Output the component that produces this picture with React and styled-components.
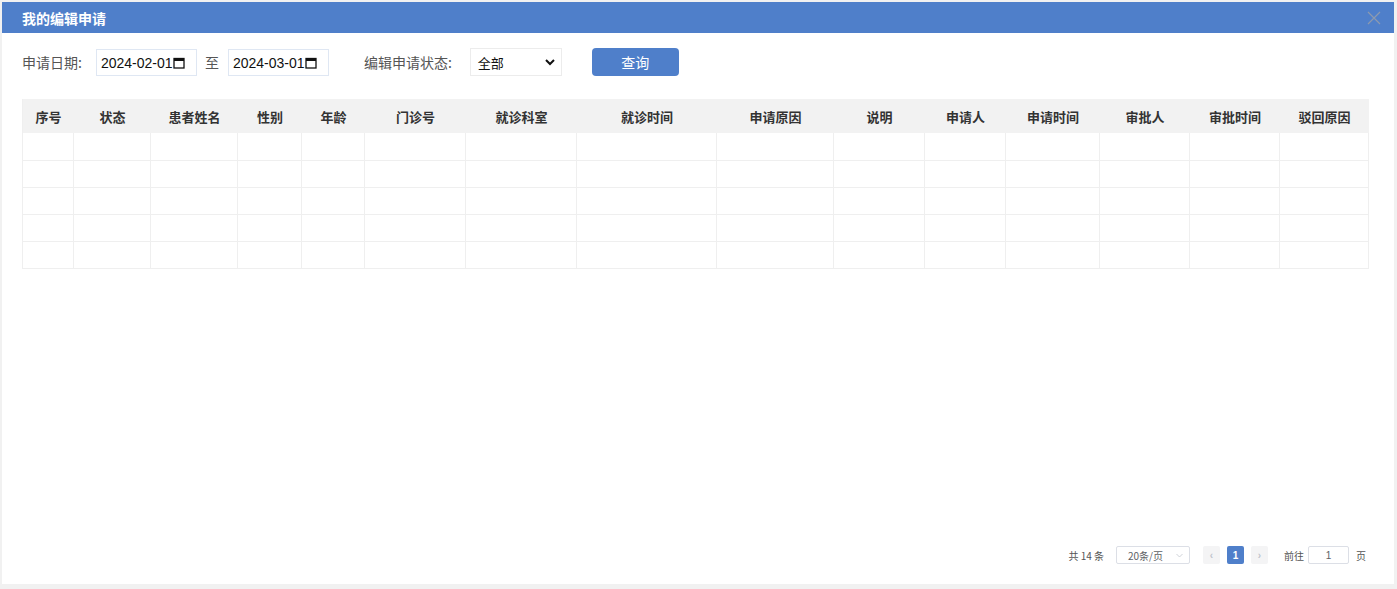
import React from "react";
import styled, { createGlobalStyle } from "styled-components";

const Global = createGlobalStyle`
  html, body { margin: 0; padding: 0; background: #f1f1f1; }
  body { font-family: "Liberation Sans", "Noto Sans CJK SC", sans-serif; color: #333; }
  * { box-sizing: border-box; }
`;

const Dialog = styled.div`
  margin: 2px 3px 0 2px;
  height: 582px;
  background: #fff;
  display: flex;
  flex-direction: column;
`;

const Header = styled.div`
  height: 31px;
  background: #4f7fca;
  display: flex;
  align-items: center;
  justify-content: space-between;
  padding: 0 12px 0 20px;
`;

const Title = styled.div`
  color: #fff;
  font-size: 14px;
  font-weight: bold;
  font-family: "Noto Sans CJK SC", sans-serif;
`;

const Close = styled.div`
  width: 16px;
  height: 16px;
  display: flex;
  align-items: center;
  justify-content: center;
`;

const Body = styled.div`
  flex: 1;
  display: flex;
  flex-direction: column;
  padding: 15px 26px 20px 20px;
`;

const Filters = styled.div`
  display: flex;
  align-items: center;
  height: 28px;
`;

const Label = styled.span`
  font-size: 14px;
  color: #555;
  font-family: "Noto Sans CJK SC", sans-serif;
  margin-right: ${(p) => p.$mr || 0}px;
  margin-left: ${(p) => p.$ml || 0}px;
`;

const DateBox = styled.div`
  width: 101px;
  height: 27px;
  border: 1px solid #dfe7f3;
  display: flex;
  align-items: center;
  padding-left: 4px;
  font-size: 14px;
  color: #111;
  font-family: "Liberation Sans", sans-serif;
  margin-top: 1px;
`;

const SelectBox = styled.div`
  width: 92px;
  height: 28px;
  border: 1px solid #ececec;
  display: flex;
  align-items: center;
  justify-content: space-between;
  padding: 0 5px 0 7px;
  font-size: 13px;
  color: #111;
  font-family: "Noto Sans CJK SC", sans-serif;
`;

const QueryButton = styled.button`
  margin-left: 30px;
  width: 87px;
  height: 28px;
  border: none;
  border-radius: 4px;
  background: #4f7fca;
  color: #fff;
  font-size: 14px;
  font-family: "Noto Sans CJK SC", sans-serif;
  padding: 0;
`;

const Table = styled.div`
  margin-top: 23px;
  width: 1347px;
  border-left: 1px solid #efefef;
  border-bottom: 1px solid #efefef;
`;

const Grid = styled.div`
  display: grid;
  grid-template-columns: ${(p) => p.$cols};
  height: ${(p) => p.$h}px;
  background: ${(p) => (p.$head ? "#f2f2f2" : "#fff")};
`;

const HeadCell = styled.div`
  display: flex;
  align-items: center;
  justify-content: center;
  font-size: 13px;
  font-weight: bold;
  color: #333;
  font-family: "Noto Sans CJK SC", sans-serif;
`;

const Cell = styled.div`
  border-right: 1px solid #efefef;
  border-top: ${(p) => (p.$first ? "none" : "1px solid #efefef")};
`;

const Spacer = styled.div`
  flex: 1;
`;

const Pager = styled.div`
  display: flex;
  align-items: center;
  justify-content: flex-end;
  font-size: 10px;
  color: #555;
  font-family: "Noto Sans CJK SC", sans-serif;
  padding-right: 2px;
`;

const PagerText = styled.span`
  margin-right: ${(p) => p.$mr || 0}px;
  margin-left: ${(p) => p.$ml || 0}px;
`;

const SizeSelect = styled.div`
  width: 74px;
  height: 18px;
  border: 1px solid #dcdfe6;
  border-radius: 2px;
  display: flex;
  align-items: center;
  justify-content: space-between;
  padding: 0 5px 0 11px;
  margin-right: 13px;
  color: #606266;
`;

const PageBtn = styled.div`
  width: 17px;
  height: 18px;
  border-radius: 2px;
  display: flex;
  align-items: center;
  justify-content: center;
  margin-right: 7px;
  background: ${(p) => (p.$active ? "#4f7fca" : "#f4f4f5")};
  color: ${(p) => (p.$active ? "#fff" : "#c0c4cc")};
  font-weight: bold;
  font-size: 10px;
  font-family: "Liberation Sans", sans-serif;
`;

const JumpInput = styled.div`
  width: 41px;
  height: 18px;
  border: 1px solid #dcdfe6;
  border-radius: 2px;
  display: flex;
  align-items: center;
  justify-content: center;
  color: #606266;
  margin: 0 7px 0 4px;
  font-family: "Liberation Sans", sans-serif;
`;

const cols = [51, 77, 87, 64, 63, 101, 111, 140, 117, 91, 81, 94, 90, 90, 89];
const heads = ["序号", "状态", "患者姓名", "性别", "年龄", "门诊号", "就诊科室", "就诊时间", "申请原因", "说明", "申请人", "申请时间", "审批人", "审批时间", "驳回原因"];
const colTemplate = cols.map((c) => c + "px").join(" ");

const CalendarIcon = () => (
  <svg width="12" height="12" viewBox="0 0 12 12">
    <rect x="1" y="1.5" width="10" height="9.5" fill="none" stroke="#111" strokeWidth="1.3" />
    <rect x="1" y="1.5" width="10" height="2.5" fill="#111" />
  </svg>
);

const Chevron = ({ size = 12, color = "#111", w = 2 }) => (
  <svg width={size} height={size} viewBox="0 0 12 12">
    <path d="M2 4 L6 8 L10 4" fill="none" stroke={color} strokeWidth={w} />
  </svg>
);

export default function App() {
  return (
    <>
      <Global />
      <Dialog>
        <Header>
          <Title>我的编辑申请</Title>
          <Close>
            <svg width="14" height="14" viewBox="0 0 14 14">
              <path d="M1 1 L13 13 M13 1 L1 13" stroke="#8d9aae" strokeWidth="1.2" />
            </svg>
          </Close>
        </Header>
        <Body>
          <Filters>
            <Label $mr={14}>申请日期:</Label>
            <DateBox>2024-02-01<CalendarIcon /></DateBox>
            <Label $ml={8} $mr={9}>至</Label>
            <DateBox>2024-03-01<CalendarIcon /></DateBox>
            <Label $ml={35} $mr={18}>编辑申请状态:</Label>
            <SelectBox>全部<Chevron /></SelectBox>
            <QueryButton>查询</QueryButton>
          </Filters>
          <Table>
            <Grid $cols={colTemplate} $h={34} $head>
              {heads.map((h) => (
                <HeadCell key={h}>{h}</HeadCell>
              ))}
            </Grid>
            {[0, 1, 2, 3, 4].map((r) => (
              <Grid key={r} $cols={colTemplate} $h={27}>
                {cols.map((c, i) => (
                  <Cell key={i} $first={r === 0} />
                ))}
              </Grid>
            ))}
          </Table>
          <Spacer />
          <Pager>
            <PagerText $mr={12}>共 14 条</PagerText>
            <SizeSelect>20条/页<Chevron size={9} color="#c0c4cc" w={1} /></SizeSelect>
            <PageBtn>‹</PageBtn>
            <PageBtn $active>1</PageBtn>
            <PageBtn>›</PageBtn>
            <PagerText $ml={9}>前往</PagerText>
            <JumpInput>1</JumpInput>
            <PagerText>页</PagerText>
          </Pager>
        </Body>
      </Dialog>
    </>
  );
}
